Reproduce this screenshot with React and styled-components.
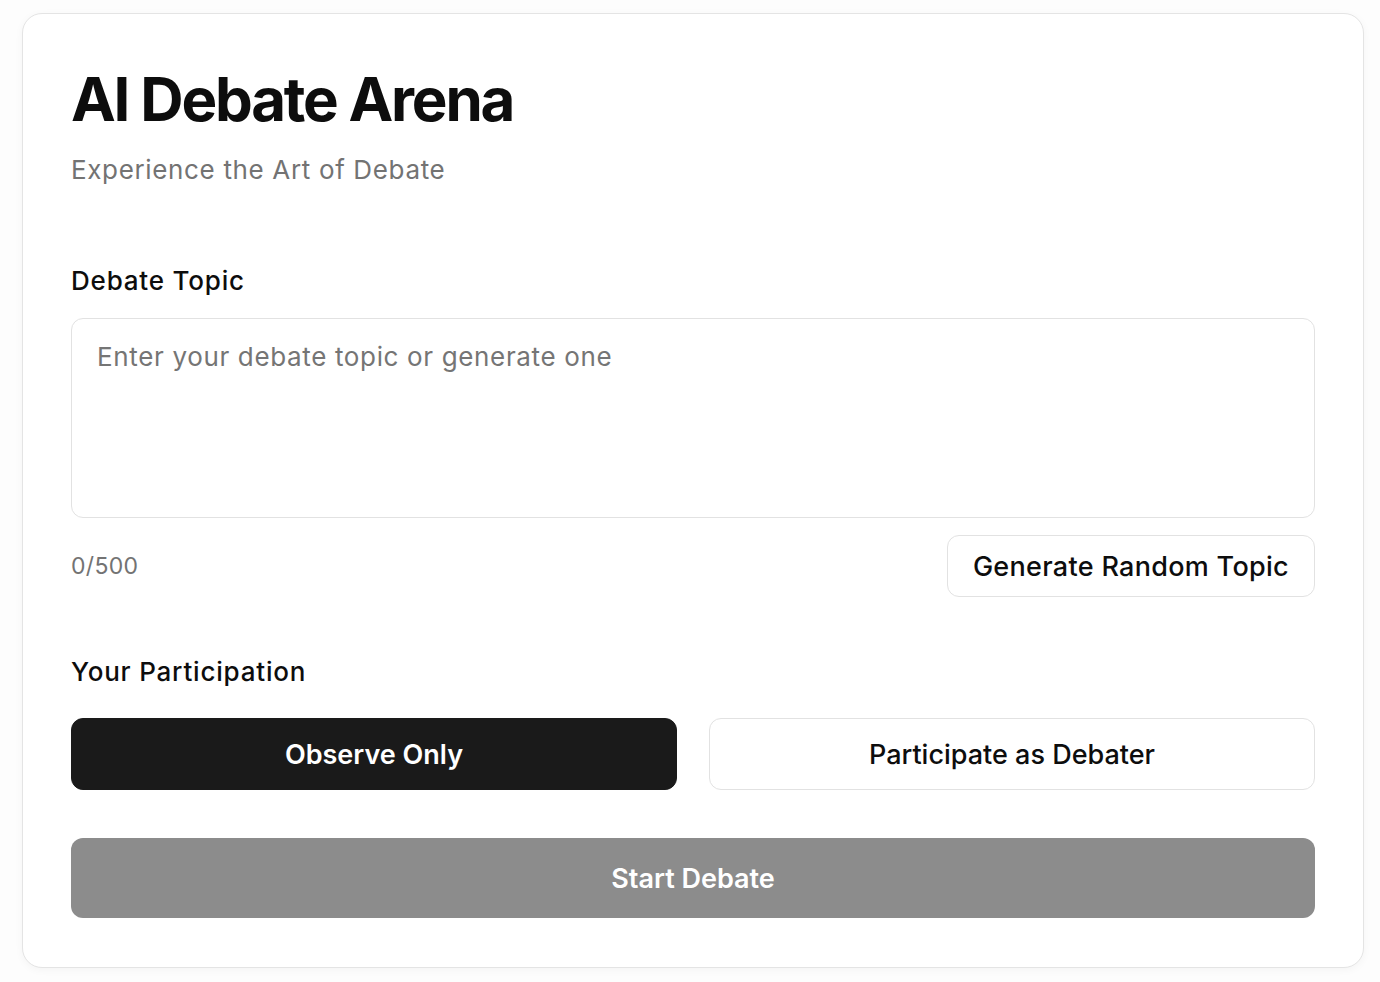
import React, { useState } from 'react';
import styled, { createGlobalStyle } from 'styled-components';

const GlobalStyle = createGlobalStyle`
  * { box-sizing: border-box; }
  html, body {
    margin: 0;
    padding: 0;
    background: #fdfdfd;
    font-family: Inter, "Noto Sans", "Liberation Sans", sans-serif;
    color: #0f0f0f;
  }
`;

const Page = styled.div`
  padding: 13px 16px 15px 22px;
`;

const Card = styled.main`
  background: #ffffff;
  border: 1px solid #e4e4e4;
  border-radius: 20px;
  box-shadow: 0 2px 8px rgba(0, 0, 0, 0.04);
  padding: 48px 48px 49px;
  display: flex;
  flex-direction: column;
`;

const Title = styled.h1`
  margin: 0;
  font-size: 60px;
  line-height: 75px;
  font-weight: 700;
  letter-spacing: -2.2px;
  color: #0d0d0d;
`;

const Subtitle = styled.p`
  margin: 15px 0 0;
  font-size: 26px;
  line-height: 36px;
  letter-spacing: 0.65px;
  color: #737373;
`;

const Section = styled.section`
  display: flex;
  flex-direction: column;
  margin-top: ${(p) => p.$top}px;
`;

const Label = styled.label`
  font-size: 26px;
  line-height: 36px;
  font-weight: 500;
  letter-spacing: 0.8px;
  color: #0d0d0d;
`;

const TopicInput = styled.textarea`
  margin-top: 19px;
  height: 200px;
  width: 100%;
  resize: none;
  border: 1px solid #e2e2e2;
  border-radius: 12px;
  padding: 20px 25px;
  font-family: inherit;
  font-size: 26px;
  line-height: 36px;
  letter-spacing: 0.65px;
  color: #0d0d0d;
  outline: none;
  &::placeholder {
    color: #757575;
  }
`;

const MetaRow = styled.div`
  margin-top: 17px;
  display: flex;
  align-items: center;
  justify-content: space-between;
`;

const Counter = styled.span`
  font-size: 23px;
  line-height: 36px;
  letter-spacing: 0.3px;
  color: #737373;
`;

const OutlineButton = styled.button`
  height: 62px;
  padding: 0 25px;
  background: #ffffff;
  border: 1px solid #e2e2e2;
  border-radius: 12px;
  font-family: inherit;
  font-size: 27px;
  font-weight: 500;
  letter-spacing: 0.3px;
  color: #0d0d0d;
  cursor: pointer;
`;

const ToggleRow = styled.div`
  margin-top: 28px;
  display: grid;
  grid-template-columns: 1fr 1fr;
  gap: 32px;
`;

const Toggle = styled.button`
  height: 72px;
  border-radius: 12px;
  font-family: inherit;
  font-size: 27px;
  font-weight: ${(p) => (p.$active ? 600 : 500)};
  cursor: pointer;
  background: ${(p) => (p.$active ? '#1a1a1a' : '#ffffff')};
  color: ${(p) => (p.$active ? '#ffffff' : '#0d0d0d')};
  border: 1px solid ${(p) => (p.$active ? '#1a1a1a' : '#e2e2e2')};
`;

const StartButton = styled.button`
  margin-top: 48px;
  height: 80px;
  width: 100%;
  border: none;
  border-radius: 12px;
  background: #8c8c8c;
  color: #ffffff;
  font-family: inherit;
  font-size: 27px;
  font-weight: 600;
  cursor: not-allowed;
`;

export default function App() {
  const [topic, setTopic] = useState('');
  const [mode, setMode] = useState('observe');

  return (
    <Page>
      <GlobalStyle />
      <Card>
        <Title>AI Debate Arena</Title>
        <Subtitle>Experience the Art of Debate</Subtitle>

        <Section $top={75}>
          <Label htmlFor="topic">Debate Topic</Label>
          <TopicInput
            id="topic"
            value={topic}
            maxLength={500}
            onChange={(e) => setTopic(e.target.value)}
            placeholder="Enter your debate topic or generate one"
          />
          <MetaRow>
            <Counter>{topic.length}/500</Counter>
            <OutlineButton type="button">Generate Random Topic</OutlineButton>
          </MetaRow>
        </Section>

        <Section $top={57}>
          <Label>Your Participation</Label>
          <ToggleRow>
            <Toggle $active={mode === 'observe'} onClick={() => setMode('observe')}>
              Observe Only
            </Toggle>
            <Toggle $active={mode === 'debate'} onClick={() => setMode('debate')}>
              Participate as Debater
            </Toggle>
          </ToggleRow>
        </Section>

        <StartButton disabled={!topic.trim()}>Start Debate</StartButton>
      </Card>
    </Page>
  );
}
